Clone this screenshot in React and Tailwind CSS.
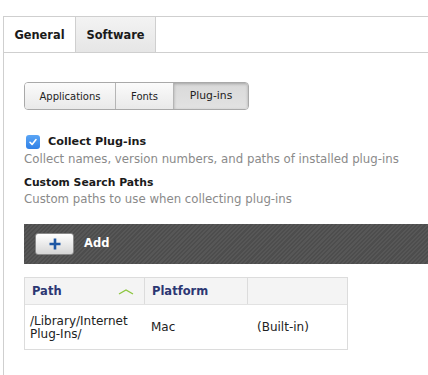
import React from "react";

export default function App() {
  return (
    <div className="w-[428px] h-[375px] overflow-hidden bg-white font-['DejaVu_Sans',sans-serif] text-[#222]">
      <div className="pt-4">
        <div className="ml-[3px] h-[359px] border-t border-l border-[#cfcfcf]">
          {/* Tabs */}
          <div className="flex h-[36px] border-b border-[#cfcfcf]">
            <div className="w-[71px] flex items-center justify-center pt-[2px] bg-white text-[11.4px] font-bold text-[#1a1a1a]">
              General
            </div>
            <div className="w-[81px] flex items-center justify-center pt-[2px] border-l border-r border-[#cfcfcf] bg-gradient-to-b from-[#f3f3f3] to-[#e6e6e6] text-[11.4px] font-bold text-[#1a1a1a]">
              Software
            </div>
          </div>

          <div className="pl-5">
            {/* Segmented control */}
            <div className="mt-[29px] flex h-[28px] w-[225px] rounded-[4px] border border-[#a9a9a9] overflow-hidden text-[10px] text-[#222]">
              <div className="w-[91px] flex items-center justify-center bg-gradient-to-b from-[#fbfbfb] to-[#e9e9e9] border-r border-[#b5b5b5]">
                Applications
              </div>
              <div className="w-[58px] flex items-center justify-center bg-gradient-to-b from-[#fbfbfb] to-[#e9e9e9] border-r border-[#b5b5b5]">
                Fonts
              </div>
              <div className="flex-1 flex items-center justify-center bg-gradient-to-b from-[#d9d9d9] to-[#e2e2e2] shadow-[inset_0_1px_3px_rgba(0,0,0,0.25)] text-[10.8px]">
                Plug-ins
              </div>
            </div>

            {/* Collect Plug-ins */}
            <div className="mt-[24px] h-[16px] flex items-center">
              <div className="ml-[2px] w-[14px] h-[14px] rounded-[3px] bg-gradient-to-b from-[#5aa5f5] to-[#2f80e6] flex items-center justify-center">
                <svg width="10" height="10" viewBox="0 0 10 10">
                  <path d="M2 5.3 L4.1 7.4 L8 2.6" fill="none" stroke="white" strokeWidth="1.6" strokeLinecap="round" strokeLinejoin="round" />
                </svg>
              </div>
              <span className="ml-[8px] text-[11.2px] font-bold text-[#1a1a1a]">Collect Plug-ins</span>
            </div>
            <div className="h-[18px] leading-[18px] text-[11.75px] text-[#8a8a8a] whitespace-nowrap">
              Collect names, version numbers, and paths of installed plug-ins
            </div>

            <div className="mt-[7px] h-[16px] leading-[16px] text-[10.8px] font-bold text-[#1a1a1a]">
              Custom Search Paths
            </div>
            <div className="h-[16px] leading-[16px] text-[11.75px] text-[#8a8a8a] whitespace-nowrap">
              Custom paths to use when collecting plug-ins
            </div>

            {/* Dark toolbar */}
            <div className="mt-[17px] h-[40px] flex items-center bg-[repeating-linear-gradient(135deg,#575757_0px,#575757_1.5px,#4d4d4d_1.5px,#4d4d4d_3px)]">
              <div className="ml-[11px] w-[39px] h-[22px] rounded-[3px] border border-[#8a8a8a] bg-gradient-to-b from-[#ffffff] to-[#d6d6d6] flex items-center justify-center">
                <svg width="12" height="12" viewBox="0 0 12 12">
                  <path d="M6 0.5 V11.5 M0.5 6 H11.5" stroke="#1e57a3" strokeWidth="2.6" />
                </svg>
              </div>
              <span className="ml-[10px] text-[11.5px] font-bold text-white">Add</span>
            </div>

            {/* Table */}
            <div className="mt-[13px] w-[324px] border border-[#dcdcdc]">
              <div className="flex h-[27px] bg-[#f4f4f4] border-b border-[#e2e2e2] text-[11.5px] font-bold text-[#2c3773]">
                <div className="w-[120px] flex items-center justify-between pl-[7px] pr-[10px] pt-[1px] border-r border-[#dcdcdc]">
                  <span>Path</span>
                  <svg width="16" height="6" viewBox="0 0 16 6">
                    <path d="M1 5 L8 1 L15 5" fill="none" stroke="#8cc63f" strokeWidth="1.4" />
                  </svg>
                </div>
                <div className="w-[103px] flex items-center pl-[7px] pt-[1px] border-r border-[#dcdcdc]">Platform</div>
                <div className="flex-1" />
              </div>
              <div className="flex h-[44px] bg-white text-[12px] text-[#222] leading-[13px]">
                <div className="w-[120px] flex items-center pl-[5px] pt-[2px]">
                  <span>/Library/Internet<br />Plug-Ins/</span>
                </div>
                <div className="w-[103px] flex items-center pl-[6px] pt-[1px]">Mac</div>
                <div className="flex-1 flex items-center pl-[9px] pt-[1px]">(Built-in)</div>
              </div>
            </div>
          </div>
        </div>
      </div>
    </div>
  );
}
